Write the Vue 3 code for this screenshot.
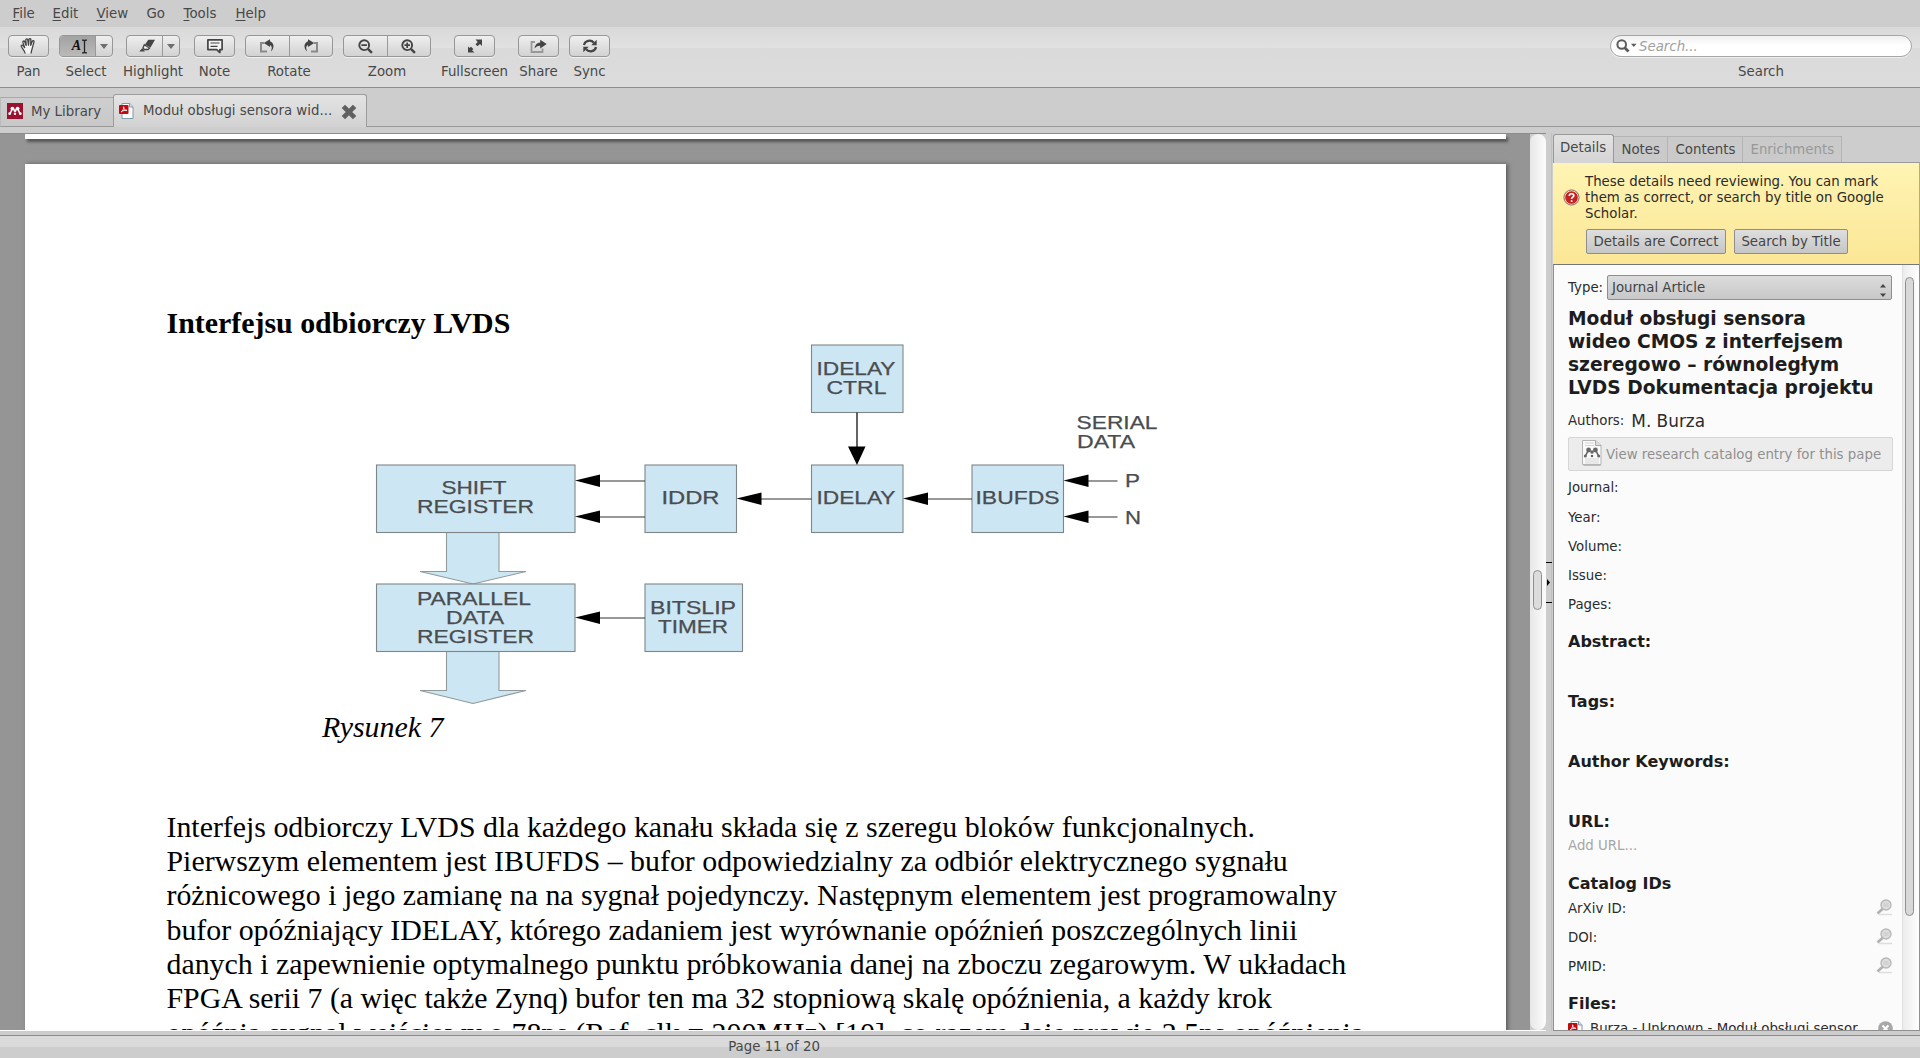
<script setup>
const menus = [
  { key: 'F', rest: 'ile', w: 40 },
  { key: 'E', rest: 'dit', w: 44 },
  { key: 'V', rest: 'iew', w: 50 },
  { key: '', rest: 'Go', w: 37 },
  { key: 'T', rest: 'ools', w: 52 },
  { key: 'H', rest: 'elp', w: 40 }
]
const panelTabs = [
  { label: 'Notes', cls: 'notes' },
  { label: 'Contents', cls: 'contents' },
  { label: 'Enrichments', cls: 'enrich' }
]
const paragraph = [
  { t: 'Interfejs odbiorczy LVDS dla każdego kanału składa się z szeregu bloków funkcjonalnych.', w: 1086 },
  { t: 'Pierwszym elementem jest IBUFDS – bufor odpowiedzialny za odbiór elektrycznego sygnału', w: 1120 },
  { t: 'różnicowego i jego zamianę na na sygnał pojedynczy. Następnym elementem jest programowalny', w: 1169 },
  { t: 'bufor opóźniający IDELAY, którego zadaniem jest wyrównanie opóźnień poszczególnych linii', w: 1129 },
  { t: 'danych i zapewnienie optymalnego punktu próbkowania danej na zboczu zegarowym. W układach', w: 1178 },
  { t: 'FPGA serii 7 (a więc także Zynq) bufor ten ma 32 stopniową skalę opóźnienia, a każdy krok', w: 1104 },
  { t: 'opóźnia sygnał wejściowy o 78ps (Ref. clk = 200MHz) [10], co razem daje prawie 2,5ns opóźnienia', w: 1194 }
]
const boxes = [
  [811.5, 345, 91.5, 67.5], [376.5, 465, 198.5, 67.5], [645, 465, 91.5, 67.5],
  [811.5, 465, 91.5, 67.5], [972, 465, 91.5, 67.5], [376.5, 584, 198.5, 67.5], [645, 584, 97.5, 67.5]
]
const arrows = [
  [575, 645, 481], [575, 645, 517], [736.5, 811.5, 499], [903, 972, 499],
  [1063.5, 1117.5, 481], [1063.5, 1117.5, 517], [575, 645, 618]
]
const labels = [
  ['IDELAY', 816.5, 375, 79], ['CTRL', 826.5, 394, 60],
  ['SHIFT', 441.500, 494, 65], ['REGISTER', 417, 513, 117],
  ['IDDR', 661.5, 503.5, 58], ['IDELAY', 816.5, 503.5, 79], ['IBUFDS', 975.5, 503.5, 84],
  ['SERIAL', 1076.5, 428.5, 81], ['DATA', 1077, 447.5, 58], ['P', 1125, 486.5, 15], ['N', 1125, 523.5, 16],
  ['PARALLEL', 417, 604.5, 114], ['DATA', 446, 623.5, 58], ['REGISTER', 417, 642.5, 117],
  ['BITSLIP', 650, 614, 86], ['TIMER', 658, 633, 70]
]
const fields = ['Journal:', 'Year:', 'Volume:', 'Issue:', 'Pages:']
const ids = ['ArXiv ID:', 'DOI:', 'PMID:']
</script>

<template>
  <div class="app">
    <nav class="menu">
      <span v-for="m in menus" :key="m.rest" :style="{ width: m.w + 'px' }"><u v-if="m.key">{{ m.key }}</u>{{ m.rest }}</span>
    </nav>

    <header class="toolbar">
      <div class="group w41 g8">
        <div class="btns"><button class="btn">
          <svg width="18" height="18" viewBox="0 0 18 18"><path d="M5.200 16.500C5 14 2.200 11.700 1.300 9.600c-.5-1.300 1-1.900 1.900-.8l1.500 1.800L2.900 5.400c-.4-1.400 1.300-1.900 1.800-.6l1.500 3.600L5.800 2.900c0-1.400 1.800-1.500 2 0l.7 5.200.5-5.600c.2-1.300 1.900-1.100 1.900.2l-.2 5.600 1.600-4.100c.5-1.100 2-.6 1.700.6l-1.900 7.100c-.5 1.800-1 2.900-1 4.600" fill="#f4f4f4" stroke="#444" stroke-width="1.300" stroke-linejoin="round" /></svg>
        </button></div><label>Pan</label>
      </div>
      <div class="group w54 g10">
        <div class="btns"><button class="btn on first">
          <i class="bold-a">A</i><svg class="ibeam" width="7" height="15" viewBox="0 0 7 15"><path d="M1 1.200h1.700l.8.800.8-.8H6M1 13.800h1.700l.8-.8.8.8H6M3.500 2v11" fill="none" stroke="#222" stroke-width="1.300" /></svg>
        </button><button class="btn drop"><span class="tri"></span></button></div><label>Select</label>
      </div>
      <div class="group w54 g13">
        <div class="btns"><button class="btn first">
          <svg class="hl" width="18" height="14" viewBox="0 0 18 14"><path d="M7 5.500 10.300.8H17l-4.500 7.600z" fill="#444" /><path d="M6.300 5.800 11.500 9l-1.500 1.500H6.200L5 9z" fill="#eee" stroke="#444" stroke-width="1.300" /><path d="M4.200 9.300 7 12.600H1.300z" fill="#444" /></svg>
        </button><button class="btn drop"><span class="tri"></span></button></div><label>Highlight</label>
      </div>
      <div class="group w41 g14">
        <div class="btns"><button class="btn">
          <svg width="18" height="16" viewBox="0 0 18 16"><path d="M1.900 1.900h14.200v9.700h-2.200v2.900l-3.200-2.900H1.900z" fill="#f4f4f4" stroke="#444" stroke-width="1.700" stroke-linejoin="round" /><path d="M4.500 5h9M4.500 8.300h7" stroke="#444" stroke-width="1.200" /></svg>
        </button></div><label>Note</label>
      </div>
      <div class="group w88 g10">
        <div class="btns"><button class="btn">
          <svg width="16" height="14" viewBox="0 0 16 14"><path d="M5 4H2v8.500h6" fill="none" stroke="#8a8a8a" stroke-width="2" /><path d="M4.800 3.900 11 .2v2c4 1.300 5 6.800.8 10.300 1.500-3.400 1.300-5.500-.8-6.600v2z" fill="#444" /></svg>
        </button><button class="btn next">
          <svg width="16" height="14" viewBox="0 0 16 14"><path d="M11 4h3v8.500H8" fill="none" stroke="#8a8a8a" stroke-width="2" /><path d="M11.200 3.900 5 .2v2C1 3.500 0 9 4.200 12.500 2.700 9.100 2.900 7 5 5.900v2z" fill="#444" /></svg>
        </button></div><label>Rotate</label>
      </div>
      <div class="group w88 g10">
        <div class="btns"><button v-for="n in 2" :key="n" class="btn" :class="{ next: n === 2 }">
          <svg width="15" height="15" viewBox="0 0 15 15"><circle cx="6.200" cy="6.200" r="4.900" fill="none" stroke="#444" stroke-width="1.900" /><path d="m9.900 9.900 4 4" stroke="#444" stroke-width="2.400" /><path d="M3.400 6.200H9" stroke="#444" stroke-width="1.700" /><path v-if="n === 2" d="M6.200 3.400V9" stroke="#444" stroke-width="1.700" /></svg>
        </button></div><label>Zoom</label>
      </div>
      <div class="group w41 g23">
        <div class="btns"><button class="btn">
          <svg width="16" height="16" viewBox="0 0 16 16"><path d="M8.500 1.500H15V8l-2-2-2.500 2.300-2-2L10.700 4zM7.500 14.500H1V8.500l1.700 1.600L4 8.700l2.300 2.300-1.200 1.300z" fill="#444" /></svg>
        </button></div><label>Fullscreen</label>
      </div>
      <div class="group w41 g23">
        <div class="btns"><button class="btn">
          <svg width="17" height="14" viewBox="0 0 17 14"><path d="M5 3H1.500v10h11V9.500" fill="none" stroke="#999" stroke-width="1.800" /><path d="M10.200.8 16.700 5l-6.500 4.400V6.700C7.500 6.600 6 7.800 4.500 9.500 4.900 6 6.800 3.700 10.200 3.400z" fill="#444" /></svg>
        </button></div><label>Share</label>
      </div>
      <div class="group w41 g10">
        <div class="btns"><button class="btn">
          <svg width="16" height="14" viewBox="0 0 16 14"><path d="M2 6C2.900 1.300 9 .300 11.800 3.700M14 8c-.9 4.700-7 5.700-9.800 2.300" fill="none" stroke="#444" stroke-width="2.200" /><path d="M14.700.8v5.400H9.300zM1.300 13.200V7.800h5.400z" fill="#444" /></svg>
        </button></div><label>Sync</label>
      </div>
      <div class="searchbox">
        <div class="field">
          <svg width="21" height="14" viewBox="0 0 21 14"><circle cx="5.700" cy="5.500" r="4.300" fill="none" stroke="#5c5c5c" stroke-width="2" /><path d="m8.800 8.800 3.700 3.800" stroke="#5c5c5c" stroke-width="2.800" /><path d="M15 4.800h5.600L17.800 8z" fill="#5c5c5c" /></svg>
          <em>Search...</em>
        </div>
        <label>Search</label>
      </div>
    </header>

    <div class="tabs">
      <div class="tab lib">
        <svg width="16" height="16" viewBox="0 0 16 16"><rect width="16" height="16" fill="#9b1230" /><g fill="#fff"><circle cx="5.400" cy="5.600" r="1.900" /><circle cx="10.600" cy="5.600" r="1.900" /><circle cx="8" cy="7.400" r="1.500" /><circle cx="2.700" cy="10.700" r="1.400" /><circle cx="13.300" cy="10.700" r="1.400" /><circle cx="8" cy="10.800" r="1.200" /></g><path d="M3.400 10 4.700 7M12.600 10l-1.300-3" stroke="#fff" stroke-width="1.500" /></svg>
        <span>My Library</span>
      </div>
      <div class="tab doc">
        <svg width="15" height="16" viewBox="0 0 15 16"><path d="M3 .5h8L14 4v11.500H3z" fill="#fff" stroke="#7c9aa8" /><path d="M10.500.5V4H14" fill="#dde" stroke="#7c9aa8" /><rect y="2" width="9.500" height="9" rx="1" fill="#c40a10" /><path d="M2 9c2-1.500 3-3.500 2.600-5.200C4.800 6.500 6.500 7.500 8 7.400 6 7 4 7.500 2 9z" fill="none" stroke="#fff" stroke-width=".9" /></svg>
        <span>Moduł obsługi sensora wid...</span>
        <svg class="x" width="16" height="16" viewBox="0 0 16 16"><path d="m2.400 2.400 11.200 11.200M13.600 2.400 2.400 13.600" stroke="#606060" stroke-width="4.800" /></svg>
      </div>
      <div class="tabfill"></div>
    </div>

    <main class="work">
      <section class="viewer">
        <div class="canvas">
          <div class="prev-page"></div>
          <article class="page">
            <h1><span>Interfejsu odbiorczy LVDS</span></h1>
            <svg class="diagram" width="800" height="370" viewBox="370 340 800 370">
              <g fill="#cde6f3" stroke="#7f8688" stroke-width="1.100">
                <path d="M446.500 532v39.500H420L473 584l53-12.500h-27V532zM446.500 651v39.500H420L473 703.500l53-13h-27V651z" stroke="#929a9c" />
                <rect v-for="(b, i) in boxes" :key="i" :x="b[0]" :y="b[1]" :width="b[2]" :height="b[3]" />
              </g>
              <path d="M857 412.500V450" stroke="#111" stroke-width="1.300" />
              <path d="M848 446.500h17.500L857 465z" fill="#000" />
              <g v-for="(a, i) in arrows" :key="'a' + i">
                <path :d="`M${a[0] + 20} ${a[2]}H${a[1]}`" stroke="#333" stroke-width="1.100" />
                <path :d="`M${a[0]} ${a[2] - 0.5}l25-6v12.500z`" fill="#000" />
              </g>
              <g class="lbl">
                <text v-for="(l, i) in labels" :key="'l' + i" :x="l[1]" :y="l[2]" :textLength="l[3]" lengthAdjust="spacingAndGlyphs">{{ l[0] }}</text>
              </g>
            </svg>
            <p class="caption">Rysunek 7</p>
            <div class="body">
              <p v-for="(l, i) in paragraph" :key="i" :style="{ width: l.w + 'px' }">{{ l.t }}</p>
            </div>
          </article>
        </div>
        <div class="vscroll"><div class="thumb"></div></div>
      </section>
      <div class="splitter"><div class="grip"><svg width="3" height="7" viewBox="0 0 3 7"><path d="M0 0v7l3-3.500z" /></svg></div></div>

      <aside class="panel">
        <div class="ptabs">
          <div class="ptab active"><span>Details</span></div>
          <div v-for="t in panelTabs" :key="t.label" class="ptab" :class="t.cls"><span>{{ t.label }}</span></div>
        </div>
        <div class="notice">
          <svg width="17" height="17" viewBox="0 0 17 17"><circle cx="8.500" cy="8.500" r="7.600" fill="#f3dcc8" stroke="#8f6a5a" stroke-width="1" /><circle cx="8.500" cy="8.500" r="6.300" fill="#c4211f" /><path d="M6.300 7c0-3 4.600-2.900 4.500-.3C10.800 8.200 8.600 8.200 8.600 10M8.600 11.200v1.800" fill="none" stroke="#fff" stroke-width="1.700" /></svg>
          <div>
            <p>These details need reviewing. You can mark<br>them as correct, or search by title on Google<br>Scholar.</p>
            <div class="nbtns"><button class="w140">Details are Correct</button><button class="w114">Search by Title</button></div>
          </div>
        </div>
        <div class="details">
          <div class="form">
            <div class="type"><span>Type:</span><div class="select"><span>Journal Article</span><svg width="6" height="13" viewBox="0 0 6 13"><path d="M0 3.500 3 0l3 3.500zM0 9.500h6L3 13z" fill="#444" /></svg></div></div>
            <h2>Moduł obsługi sensora<br>wideo CMOS z interfejsem<br>szeregowo – równoległym<br>LVDS Dokumentacja projektu</h2>
            <div class="authors"><span>Authors:</span><b>M. Burza</b></div>
            <div class="catalog">
              <svg width="22" height="28" viewBox="0 0 22 28"><rect x="2" y="24" width="18" height="3" rx="1.500" fill="#bbb" /><path d="M1.500 1.500H15l5 5v19H1.500z" fill="#fafafa" stroke="#b4b4b4" /><path d="M14.500 1.500v5H20" fill="#ddd" stroke="#aaa" /><path d="M4 4h9M4 6.500h9M4 20h14M4 22h14M4 24h14" stroke="#ccc" stroke-width=".8" /><g fill="#666"><circle cx="7.600" cy="11" r="2.400" /><circle cx="14.400" cy="11" r="2.400" /><circle cx="11" cy="13" r="1.800" /><circle cx="4.300" cy="17" r="1.500" /><circle cx="17.700" cy="17" r="1.500" /><circle cx="11" cy="17" r="1.300" /></g><path d="m4.800 16.300 1.800-3.800M17.200 16.300l-1.800-3.800" stroke="#666" stroke-width="1.600" /></svg>
              <span>View research catalog entry for this pape</span>
            </div>
            <div class="fields"><div v-for="f in fields" :key="f" class="row">{{ f }}</div></div>
            <h3>Abstract:</h3>
            <h3>Tags:</h3>
            <h3>Author Keywords:</h3>
            <h3 class="tight">URL:</h3>
            <div class="addurl">Add URL...</div>
            <h3 class="tight">Catalog IDs</h3>
            <div v-for="f in ids" :key="f" class="row id">
              <span>{{ f }}</span>
              <svg width="17" height="17" viewBox="0 0 17 17"><path d="M3 15.500h13" stroke="#ddd" stroke-width="1.500" /><path d="m1.500 14.500 5.500-5" stroke="#b0b0b0" stroke-width="2.600" /><circle cx="10" cy="6" r="5" fill="#ddd" stroke="#b8b8b8" stroke-width="1.400" /><path d="M7.500 5h5M7.500 7h5" stroke="#c8c8c8" /></svg>
            </div>
            <h3 class="files">Files:</h3>
            <div class="row file">
              <svg width="15" height="16" viewBox="0 0 15 16"><path d="M3 .5h8L14 4v11.500H3z" fill="#fff" stroke="#7c9aa8" /><path d="M10.500.5V4H14" fill="#dde" stroke="#7c9aa8" /><rect y="2" width="9.500" height="9" rx="1" fill="#c40a10" /><path d="M2 9c2-1.500 3-3.500 2.600-5.200C4.800 6.500 6.500 7.500 8 7.400 6 7 4 7.500 2 9z" fill="none" stroke="#fff" stroke-width=".9" /></svg>
              <span>Burza - Unknown - Moduł obsługi sensor</span>
              <svg class="del" width="15" height="15" viewBox="0 0 15 15"><circle cx="7.500" cy="7.500" r="7.300" fill="#a8a8a8" /><path d="m4.500 4.500 6 6M10.500 4.500l-6 6" stroke="#fff" stroke-width="2" /></svg>
            </div>
          </div>
          <div class="pscroll"><div class="thumb"></div></div>
        </div>
      </aside>
    </main>

    <footer class="status"><span>Page 11 of 20</span></footer>
  </div>
</template>

<style>
body { overflow: hidden; }
</style>

<style scoped>
* { box-sizing: border-box; }
p, h1, h2, h3 { margin: 0; }
button { padding: 0; margin: 0; font: inherit; color: inherit; }
.app { width: 1920px; height: 1058px; display: flex; flex-direction: column; background: #cdcdcd; font-family: "DejaVu Sans", sans-serif; font-size: 13.33px; color: #484848; white-space: nowrap; overflow: hidden; }
.menu { height: 27px; flex: none; display: flex; padding-left: 12.500px; line-height: 28px; }
.menu u { text-underline-offset: 2px; text-decoration-thickness: 1px; }
.toolbar { height: 61px; flex: none; display: flex; padding-top: 8px; background: linear-gradient(#d9d9d9, #e1e1e1 21px, #dadada 21px, #dcdcdc); border-bottom: 1px solid #8c8c8c; }
.group { display: flex; flex-direction: column; align-items: center; }
.group label, .searchbox label { line-height: 20px; margin-top: 5px; }
.w41 { width: 41px; } .w54 { width: 54px; } .w88 { width: 88px; }
.g8 { margin-left: 8px; } .g10 { margin-left: 10px; } .g13 { margin-left: 13px; } .g14 { margin-left: 14px; } .g23 { margin-left: 23px; }
.btns { display: flex; width: 100%; height: 22px; flex: none; border: 1px solid #979797; border-radius: 4px; background: linear-gradient(#efefef, #d2d2d2); box-shadow: 0 1px 0 #f0f0f0; overflow: hidden; }
.btn { flex: 1; border: 0; background: none; display: flex; align-items: center; justify-content: center; }
.btn.first { flex: none; width: 35px; }
.btn.first .hl { margin-left: 4px; }
.btn.drop, .btn.next { border-left: 1px solid #999; }
.btn.on { background: linear-gradient(#a2a2a2, #bababa); }
.tri { border: 4px solid transparent; border-top: 5px solid #6e6e6e; border-bottom: 0; margin-top: 1px; }
.bold-a { font: italic bold 14px/20px "Liberation Serif", serif; color: #111; margin-left: 5px; }
.searchbox { margin-left: auto; margin-right: 8px; width: 302px; display: flex; flex-direction: column; align-items: center; }
.field { width: 100%; height: 22px; flex: none; border: 1px solid #a6a6a6; border-radius: 11px; background: linear-gradient(#efefef, #fff 9px); box-shadow: 0 1px 0 #f0f0f0; display: flex; align-items: center; padding-left: 5px; }
.field em { margin-left: 2px; color: #a0a0a0; }

.tabs { height: 45px; flex: none; display: flex; align-items: flex-start; padding-top: 6px; }
.tab { display: flex; align-items: center; border: 1px solid #a8a8a8; border-bottom: 0; }
.lib { width: 113px; height: 30px; margin-top: 3px; padding: 0 0 2px 6px; border-left-color: #bbb; border-bottom: 1px solid #9a9a9a; background: linear-gradient(#cfcfcf, #c8c8c8); border-right: 0; }
.lib span { margin-left: 8px; }
.doc { width: 254px; height: 33px; padding: 0 0 1px 5px; border-radius: 3px 3px 0 0; background: linear-gradient(#e4e4e4, #d2d2d2); border-color: #9c9c9c; }
.doc span { margin-left: 9px; width: 189px; }
.doc .x { margin: 2px 0 0 9px; }
.tabfill { flex: 1; height: 33px; border-bottom: 1px solid #9a9a9a; }

.work { display: flex; height: 898px; flex: none; }
.viewer { width: 1546px; height: 898px; display: flex; border-top: 1px solid #8c8c8c; border-bottom: 1px solid #fff; }
.canvas { width: 1530px; height: 896px; overflow: hidden; background: #959595; padding-left: 25px; }
.prev-page { width: 1481px; height: 5px; background: #fff; box-shadow: 2px 3px 3px #555; }
.page { width: 1481px; height: 900px; margin-top: 25px; background: #fff; box-shadow: 2px 0 4px #5c5c5c; padding-left: 141.500px; font-family: "Liberation Serif", serif; color: #000; }
h1 { font-size: 29.900px; line-height: 34px; padding-top: 142px; }
.diagram { display: block; margin: 0 0 0 203.500px; }
.lbl { font: 18px "Liberation Sans", sans-serif; fill: #4a4d50; stroke: #4a4d50; stroke-width: .25px; }
.caption { font-size: 29.900px; line-height: 34px; font-style: italic; margin: 0 0 0 155.500px; }
.body { margin-top: 65.500px; font-size: 29.860px; line-height: 34.350px; }
.body p { text-align-last: justify; }
.vscroll { width: 16px; background: linear-gradient(90deg, #e8e8e8, #fcfcfc); padding: 436px 3px 0; border-radius: 8px; }
.vscroll .thumb { width: 9px; height: 40px; border: 1px solid #8f8f8f; border-radius: 5px; background: #dcdcdc; }
.splitter { width: 6px; padding-top: 429px; border-right: 1px solid #c0c0c0; }
.grip { height: 41px; width: 6px; border-top: 1px solid #000; border-bottom: 1px solid #000; display: flex; align-items: center; padding-left: 1px; }

.panel { width: 367px; margin-left: 1px; height: 898px; color: #2b2b2b; }
.ptabs { display: flex; height: 30px; align-items: flex-end; color: #484848; border-bottom: 1px solid #9a9a9a; }
.ptab { height: 26px; line-height: 26px; border: 1px solid #b4b4b4; border-left: 0; border-bottom: 0; background: #cacaca; }
.ptab.active { width: 61px; height: 29px; line-height: 26px; padding-left: 6px; border: 1px solid #999; border-bottom: 0; border-radius: 3px 3px 0 0; background: linear-gradient(#e2e2e2, #d4d4d4); margin-bottom: -1px; }
.notes { width: 54px; padding-left: 7.500px; }
.contents { width: 75px; padding-left: 7.500px; }
.enrich { width: 99px; padding-left: 7.500px; color: #999; }
.notice { height: 102px; background: linear-gradient(#fff4b4, #fbe795); border-right: 1px solid #aaa; border-bottom: 1px solid #777; display: flex; padding: 11px 0 0 10px; }
.notice > svg { margin-top: 15px; margin-right: 5px; flex: none; }
.notice p { line-height: 16px; }
.nbtns { display: flex; gap: 8px; margin-top: 7px; padding-left: 1px; }
.nbtns button { height: 25px; border: 1px solid #8e8e8e; border-radius: 2px; background: linear-gradient(#dedede, #c6c6c6); color: #444; line-height: 22px; }
.w140 { width: 140px; } .w114 { width: 114px; }
.details { height: 766px; display: flex; background: #fbfbfb; border: 1px solid #909090; border-top: 0; overflow: hidden; }
.form { width: 348px; padding: 10px 9px 0 14px; }
.type { height: 25px; display: flex; align-items: center; justify-content: space-between; padding-right: 1px; }
.select { width: 285px; height: 25px; border: 1px solid #8e8e8e; border-radius: 2px; background: linear-gradient(#dcdcdc, #c8c8c8); display: flex; align-items: center; justify-content: space-between; padding: 0 5px 0 4px; color: #444; }
.select svg { margin-top: 5px; }
h2 { font-size: 18.670px; line-height: 23px; margin-top: 7px; color: #1d1d1d; }
.authors { height: 25px; margin-top: 9px; display: flex; align-items: center; }
.authors b { font-weight: normal; font-size: 16.900px; margin-left: 7px; }
.catalog { width: 325px; height: 34px; margin-top: 4px; border: 1px solid #d6d6d6; border-radius: 2px; background: #ececec; color: #909090; display: flex; align-items: center; padding-left: 12px; }
.catalog svg { margin-right: 3px; margin-top: -2px; }
.fields { margin-top: 2px; height: 159px; }
.row { height: 29px; line-height: 29px; }
.row:first-child { margin-bottom: 1px; }
h3 { font-size: 16px; line-height: 20px; margin-bottom: 40px; color: #1d1d1d; }
h3.tight { margin-bottom: 0; }
h3.files { margin: 13px 0 0; }
.addurl { color: #a6a6a6; line-height: 20px; margin: 4px 0 18px; }
.id { display: flex; justify-content: space-between; align-items: center; }
.id svg { margin-top: -3px; }
.file { display: flex; align-items: center; }
.file span { margin-left: 7px; }
.file .del { margin-left: auto; }
.pscroll { width: 17px; border-left: 1px solid #e0e0e0; background: linear-gradient(90deg, #ececec, #fff); padding: 12px 3px 0 2px; }
.pscroll .thumb { width: 9px; height: 639px; border: 1px solid #8f8f8f; border-radius: 5px; background: #d8d8d8; }
.status { margin-top: 4px; height: 23px; border-top: 1px solid #8c8c8c; background: linear-gradient(#dadada 11px, #cdcdcd 11px); text-align: center; line-height: 22px; padding-right: 372px; }
</style>
